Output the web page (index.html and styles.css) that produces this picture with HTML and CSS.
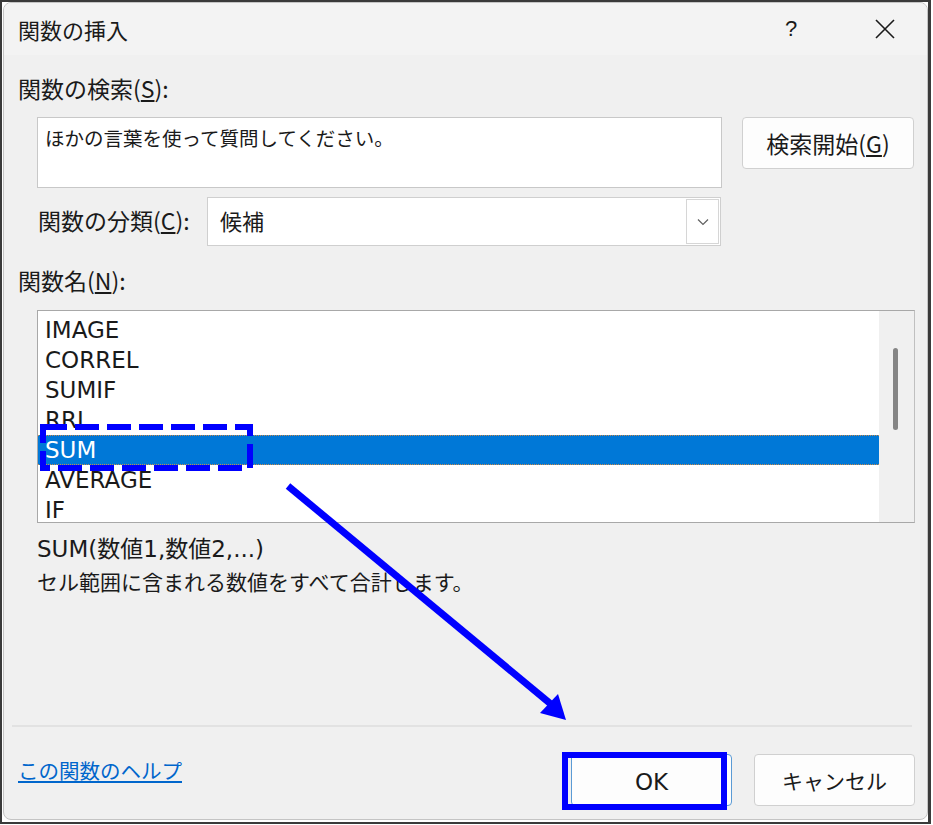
FILE: index.html
```html
<!DOCTYPE html>
<html lang="ja">
<head>
<meta charset="utf-8">
<title>関数の挿入</title>
<link rel="stylesheet" href="styles.css">
</head>
<body>
<div class="frame">
  <div class="dialog">
    <div class="titlebar">
      <span class="title">関数の挿入</span>
      <span class="help">?</span>
      <span class="close">
        <svg width="20" height="20" viewBox="0 0 20 20"><path d="M1 1 L19 19 M19 1 L1 19" stroke="#1a1a1a" stroke-width="1.6" fill="none"/></svg>
      </span>
    </div>
    <div class="body">
      <div class="label first">関数の検索(<u>S</u>):</div>
      <div class="search-row">
        <div class="search-box">ほかの言葉を使って質問してください。</div>
        <div class="btn search-btn">検索開始(<u>G</u>)</div>
      </div>
      <div class="cat-row">
        <span class="cat-label">関数の分類(<u>C</u>):</span>
        <div class="select">
          <span class="select-text">候補</span>
          <span class="select-arrow">
            <svg width="12" height="8" viewBox="0 0 12 8"><path d="M1 1.5 L6 6.5 L11 1.5" stroke="#606060" stroke-width="1.2" fill="none"/></svg>
          </span>
        </div>
      </div>
      <div class="label second">関数名(<u>N</u>):</div>
      <div class="listbox">
        <ul class="items">
          <li>IMAGE</li>
          <li>CORREL</li>
          <li>SUMIF</li>
          <li>RRI</li>
          <li class="selected">SUM</li>
          <li>AVERAGE</li>
          <li>IF</li>
        </ul>
        <div class="scrollbar"><div class="thumb"></div></div>
      </div>
      <div class="desc">
        <div class="syntax">SUM(数値1,数値2,...)</div>
        <div class="explain">セル範囲に含まれる数値をすべて合計します。</div>
      </div>
    </div>
    <div class="separator"></div>
    <div class="footer">
      <a class="help-link" href="#">この関数のヘルプ</a>
      <div class="buttons">
        <div class="btn ok">OK</div>
        <div class="btn cancel">キャンセル</div>
      </div>
    </div>
  </div>
  <svg class="annotations" width="933" height="825" viewBox="0 0 933 825">
    <rect x="43" y="427" width="207" height="41" fill="none" stroke="#0000ff" stroke-width="6" stroke-dasharray="24 8"/>
    <line x1="288" y1="486" x2="552" y2="705" stroke="#0000ff" stroke-width="7"/>
    <polygon points="566,720 540,713 558,694" fill="#0000ff"/>
    <rect x="565" y="755" width="159" height="52" fill="none" stroke="#0000ff" stroke-width="6"/>
  </svg>
</div>
</body>
</html>
```

FILE: styles.css
```css
html, body {
  margin: 0;
  padding: 0;
  background: #ffffff;
}

.frame {
  position: relative;
  width: 931px;
  height: 824px;
  box-sizing: border-box;
  border: 2px solid #3a3a3a;
  border-right-width: 3px;
  background: #ffffff;
  padding: 0 0 2px 1px;
}

.dialog {
  height: 100%;
  box-sizing: border-box;
  border: 1px solid #c4c4c4;
  border-radius: 8px;
  background: #f0f0f0;
  overflow: hidden;
  display: flex;
  flex-direction: column;
  font-family: "Noto Sans CJK JP", "Noto Sans", sans-serif;
  color: #1a1a1a;
}

.titlebar {
  height: 52px;
  flex: none;
  display: flex;
  align-items: center;
  padding-left: 14px;
  background: #f3f3f3;
}

.title {
  font-size: 22px;
  flex: 1;
}

.help {
  font-size: 22px;
  width: 30px;
  margin-right: 60px;
  font-family: "Liberation Sans", sans-serif;
}

.close {
  width: 20px;
  height: 20px;
  margin-right: 32px;
  display: flex;
}

.body {
  padding: 0 0 0 14px;
  flex: 1;
}

.label {
  font-size: 23px;
  line-height: 28px;
}

.label.first {
  margin-top: 19px;
}

.search-row {
  display: flex;
  align-items: flex-start;
  margin-top: 15px;
  margin-left: 19px;
}

.search-box {
  width: 685px;
  height: 71px;
  box-sizing: border-box;
  background: #ffffff;
  border: 1px solid #c8c8c8;
  font-size: 19.5px;
  padding: 6px 0 0 7px;
  line-height: 28px;
}

.btn {
  box-sizing: border-box;
  background: #fdfdfd;
  border: 1px solid #d0d0d0;
  border-radius: 4px;
  display: flex;
  align-items: center;
  justify-content: center;
  font-size: 23px;
}

.search-btn {
  width: 172px;
  height: 52px;
  margin-left: 20px;
}

.cat-row {
  display: flex;
  align-items: center;
  margin-top: 9px;
  margin-left: 20px;
}

.cat-label {
  font-size: 23px;
  width: 169px;
  white-space: nowrap;
  margin-top: -3px;
}

.select {
  width: 514px;
  height: 49px;
  box-sizing: border-box;
  background: #ffffff;
  border: 1px solid #cfcfcf;
  display: flex;
  align-items: center;
  padding: 1px;
}

.select-text {
  flex: 1;
  font-size: 22px;
  padding-left: 11px;
  margin-top: -3px;
}

.select-arrow {
  width: 33px;
  height: 100%;
  box-sizing: border-box;
  border: 1px solid #d6d6d6;
  display: flex;
  align-items: center;
  justify-content: center;
}

.label.second {
  margin-top: 20px;
}

.listbox {
  margin-top: 16px;
  margin-left: 19px;
  width: 878px;
  height: 213px;
  box-sizing: border-box;
  border: 1px solid #a8a8a8;
  border-right-color: #c0c0c0;
  display: flex;
  background: #ffffff;
}

.items {
  list-style: none;
  margin: 0;
  padding: 4px 0 0 0;
  flex: 1;
  overflow: hidden;
  font-family: "DejaVu Sans", "Noto Sans CJK JP", sans-serif;
  font-size: 23px;
}

.items li {
  height: 30px;
  line-height: 30px;
  padding-left: 7px;
  box-sizing: border-box;
}

.items li.selected {
  background: #0078d7;
  color: #ffffff;
  border-top: 1px dotted #c88a4a;
  border-bottom: 1px dotted #c88a4a;
  line-height: 28px;
}

.scrollbar {
  width: 35px;
  background: #f0f0f0;
  position: relative;
  flex: none;
}

.thumb {
  width: 5px;
  height: 82px;
  background: #858585;
  border-radius: 3px;
  margin: 37px 0 0 14px;
}

.desc {
  margin-left: 19px;
  margin-top: 9px;
  font-family: "DejaVu Sans", "Noto Sans CJK JP", sans-serif;
}

.desc div {
  line-height: 34px;
}

.syntax {
  font-size: 23px;
}

.explain {
  font-size: 21px;
}

.separator {
  height: 2px;
  background: #e2e2e2;
  margin: 0 15px 0 8px;
  flex: none;
}

.footer {
  height: 92px;
  flex: none;
  display: flex;
  align-items: flex-start;
  padding: 27px 12px 0 14px;
  box-sizing: border-box;
}

.help-link {
  color: #0066cc;
  font-size: 20.5px;
  line-height: 30px;
  text-decoration: underline;
  flex: 1;
  margin-top: 1px;
}

.buttons {
  display: flex;
  gap: 22px;
}

.ok {
  width: 161px;
  height: 52px;
  border-color: #5b9bd5;
  font-family: "DejaVu Sans", sans-serif;
  padding-top: 4px;
}

.cancel {
  width: 161px;
  height: 52px;
  font-size: 21px;
}

.annotations {
  position: absolute;
  left: -2px;
  top: -2px;
  pointer-events: none;
}
```
